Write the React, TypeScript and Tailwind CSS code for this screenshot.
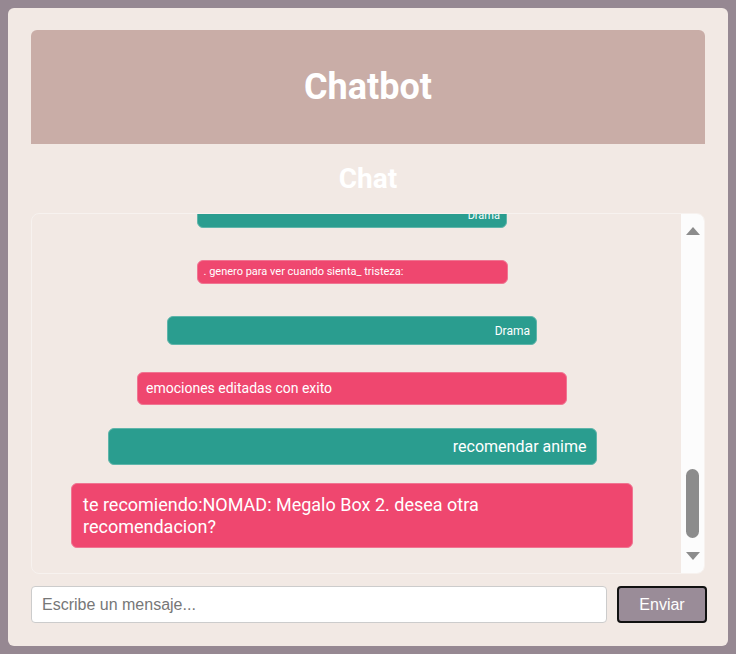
import React from "react";

type Msg = { text: string; bot: boolean; cls: string };

const msgs: Msg[] = [
  { text: "Drama", bot: false, cls: "w-[310px] h-[24px] text-[11px] px-[6px] mt-0" },
  { text: ". genero para ver cuando sienta_ tristeza:", bot: true, cls: "w-[311px] h-[24px] text-[11px] px-[6px] mt-[32px]" },
  { text: "Drama", bot: false, cls: "w-[370px] h-[29px] text-[12px] px-[6px] mt-[32px]" },
  { text: "emociones editadas con exito", bot: true, cls: "w-[430px] h-[33px] text-[14px] px-[8px] mt-[27px]" },
  { text: "recomendar anime", bot: false, cls: "w-[489px] h-[37px] text-[16px] px-[9px] mt-[23px]" },
  {
    text: "te recomiendo:NOMAD: Megalo Box 2. desea otra recomendacion?",
    bot: true,
    cls: "w-[562px] h-[65px] text-[18px] leading-[22px] px-[11px] py-[10px] mt-[18px]",
  },
];

export default function App() {
  return (
    <div className="min-h-[654px] w-full bg-[#968892] p-[8px]" style={{ fontFamily: "Roboto, 'Liberation Sans', sans-serif" }}>
      <div className="h-[638px] rounded-[6px] bg-[#f2e9e4] px-[23px] pt-[22px] flex flex-col">
        <div className="h-[114px] rounded-t-[6px] bg-[#c9ada7] flex items-center justify-center">
          <h1 className="text-[36px] font-bold text-white leading-none">Chatbot</h1>
        </div>
        <div className="h-[69px] flex items-center justify-center">
          <h2 className="text-[28px] font-bold text-white leading-none">Chat</h2>
        </div>
        <div className="h-[361px] flex border border-[#f7f2ef] rounded-[8px] overflow-hidden">
          <div className="flex-1 flex flex-col justify-end items-center overflow-hidden pr-[9px] pb-[25px]">
            {msgs.map((m, i) => (
              <div
                key={i}
                className={`shrink-0 rounded-[6px] border text-white flex ${m.cls} ${
                  m.bot
                    ? "bg-[#ef476f] border-[#f07592] items-center justify-start text-left"
                    : "bg-[#2a9d8f] border-[#5fb5aa] items-center justify-end text-right"
                }`}
              >
                <span className="max-w-[430px]">{m.text}</span>
              </div>
            ))}
          </div>
          <div className="w-[23px] bg-[#fcfcfc] flex flex-col items-center py-[13px]">
            <svg width="14" height="8" viewBox="0 0 14 8">
              <polygon points="7,0 14,8 0,8" fill="#8c8c8c" />
            </svg>
            <div className="flex-1" />
            <div className="w-[13px] h-[69px] rounded-full bg-[#8c8c8c] mb-[14px]" />
            <svg width="14" height="8" viewBox="0 0 14 8">
              <polygon points="0,0 14,0 7,8" fill="#8c8c8c" />
            </svg>
          </div>
        </div>
        <div className="flex gap-[10px] mt-[12px] -mr-[2px]">
          <input
            placeholder="Escribe un mensaje..."
            className="flex-1 h-[37px] bg-white border border-[#cccccc] rounded-[4px] px-[10px] text-[16px] placeholder:text-[#777777] outline-none"
            style={{ fontFamily: "'Liberation Sans', Arial, sans-serif" }}
          />
          <button
            className="w-[90px] h-[37px] bg-[#9a8c98] border-2 border-[#111111] rounded-[4px] text-white text-[16px]"
            style={{ fontFamily: "'Liberation Sans', Arial, sans-serif" }}
          >
            Enviar
          </button>
        </div>
      </div>
    </div>
  );
}
